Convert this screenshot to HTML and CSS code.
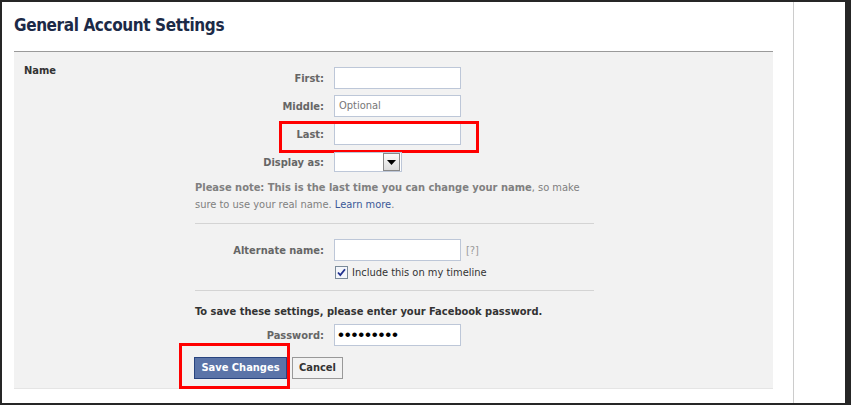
FILE: index.html
```html
<!DOCTYPE html>
<html>
<head>
<meta charset="utf-8">
<link rel="stylesheet" href="styles.css">
</head>
<body>
<div class="frame">
  <div class="page">
    <div class="main">
      <h1 class="title">General Account Settings</h1>
      <div class="panel">
        <div class="section-label">Name</div>
        <div class="form">
          <div class="row">
            <label class="lbl">First:</label>
            <div class="input"></div>
          </div>
          <div class="row">
            <label class="lbl">Middle:</label>
            <div class="input placeholder">Optional</div>
          </div>
          <div class="row highlight-row">
            <label class="lbl">Last:</label>
            <div class="input"></div>
            <div class="redbox redbox-last"></div>
          </div>
          <div class="row row-select">
            <label class="lbl">Display as:</label>
            <div class="select"><span class="select-btn"><svg width="9" height="5" viewBox="0 0 9 5"><path d="M0 0h9L4.5 5z" fill="#000"/></svg></span></div>
          </div>
          <p class="note"><b>Please note: This is the last time you can change your name</b>, so make<br>sure to use your real name. <a class="link">Learn more</a>.</p>
          <div class="divider"></div>
          <div class="row">
            <label class="lbl">Alternate name:</label>
            <div class="input"></div>
            <span class="help">[?]</span>
          </div>
          <div class="check-row">
            <svg class="checkbox" width="13" height="13" viewBox="0 0 13 13"><rect x="0.5" y="0.5" width="12" height="12" fill="#f4f6fb" stroke="#7a8a99"/><path d="M3 6.5l2.3 2.6L10 3.2" fill="none" stroke="#21318f" stroke-width="1.8"/></svg>
            <span>Include this on my timeline</span>
          </div>
          <div class="divider divider2"></div>
          <p class="save-note">To save these settings, please enter your Facebook password.</p>
          <div class="row">
            <label class="lbl">Password:</label>
            <div class="input password">•••••••••</div>
          </div>
          <div class="buttons">
            <div class="redbox redbox-save"></div>
            <button class="btn btn-primary">Save Changes</button>
            <button class="btn btn-cancel">Cancel</button>
          </div>
        </div>
      </div>
    </div>
    <div class="sidebar"></div>
  </div>
</div>
</body>
</html>
```

FILE: styles.css
```css
* { box-sizing: border-box; }
html, body { margin: 0; padding: 0; }
body {
  background: #262626;
  font-family: "DejaVu Sans Condensed", "DejaVu Sans", sans-serif;
  font-size: 11px;
  color: #333;
}
.frame {
  padding: 2px 6px 2px 2px;
  height: 405px;
}
.page {
  background: #fff;
  height: 401px;
  display: flex;
  overflow: hidden;
}
.main {
  width: 791px;
  padding-left: 12px;
  padding-top: 12px;
}
.sidebar {
  flex: 1;
  border-left: 1px solid #ccc;
}
.title {
  margin: 0 0 15px 0;
  font-size: 17px;
  letter-spacing: -0.4px;
  line-height: 22px;
  font-weight: bold;
  color: #1c2a47;
}
.panel {
  width: 759px;
  height: 338px;
  background: #f2f2f2;
  border-top: 1px solid #9a9a9a;
  border-bottom: 1px solid #e5e5e5;
  display: flex;
  padding: 15px 0 0 10px;
  position: relative;
}
.section-label {
  width: 171px;
  font-weight: bold;
  color: #333;
  line-height: 14px;
  margin-top: -3px;
}
.form {
  width: 400px;
  display: flex;
  flex-direction: column;
}
.row {
  display: flex;
  align-items: center;
  height: 22px;
  margin-bottom: 6px;
  position: relative;
}
.lbl {
  width: 139px;
  padding-right: 10px;
  text-align: right;
  font-weight: bold;
  color: #666;
}
.input {
  width: 127px;
  height: 22px;
  background: #fff;
  border: 1px solid #bdc7d8;
  padding: 3px 4px;
  line-height: 14px;
}
.placeholder { color: #777; }
.password {
  font-family: "Liberation Sans", sans-serif;
  font-size: 17px;
  letter-spacing: 0.8px;
  line-height: 14px;
  padding-left: 3px;
  color: #000;
}
.help { color: #999; margin-left: 5px; }
.row-select { height: 20px; margin-top: 1px; margin-bottom: 0; }
.select {
  width: 68px;
  height: 20px;
  background: #fff;
  border: 1px solid #bdc7d8;
  position: relative;
}
.select-btn {
  position: absolute;
  right: 1px;
  top: 0px;
  width: 17px;
  height: 18px;
  border: 1px solid #888;
  background: linear-gradient(#fafafa, #dcdcdc);
  display: flex;
  align-items: center;
  justify-content: center;
}
.note {
  margin: 7px 0 0 0;
  line-height: 17px;
  color: #808080;
  width: 400px;
  white-space: nowrap;
}
.note b { color: #808080; }
.link { color: #3b5998; }
.divider {
  height: 1px;
  background: #d4d4d4;
  margin: 10px 0 15px 0;
  width: 399px;
}
.check-row {
  display: flex;
  align-items: center;
  margin-left: 140px;
  margin-top: -2px;
  height: 14px;
  color: #333;
}
.checkbox { margin-right: 4px; }
.divider2 { margin: 11px 0 0 0; }
.save-note {
  margin: 14px 0 5px 0;
  font-weight: bold;
  color: #333;
  line-height: 14px;
}
.buttons {
  display: flex;
  gap: 5px;
  margin-top: 5px;
  margin-left: -1px;
  position: relative;
}
.btn {
  height: 22px;
  font-family: inherit;
  font-size: 11px;
  font-weight: bold;
  padding: 0 4px;
  line-height: 20px;
}
.btn-primary {
  width: 93px;
  background: #5b74a8;
  border: 1px solid #29447e;
  color: #fff;
}
.btn-cancel {
  width: 51px;
  background: #f2f2f2;
  border: 1px solid #999;
  color: #333;
}
.redbox {
  position: absolute;
  border: 3px solid #ff0000;
  pointer-events: none;
}
.redbox-last {
  left: 84px;
  top: -2px;
  width: 200px;
  height: 32px;
}
.redbox-save {
  left: -15px;
  top: -14px;
  width: 111px;
  height: 46px;
}
```
